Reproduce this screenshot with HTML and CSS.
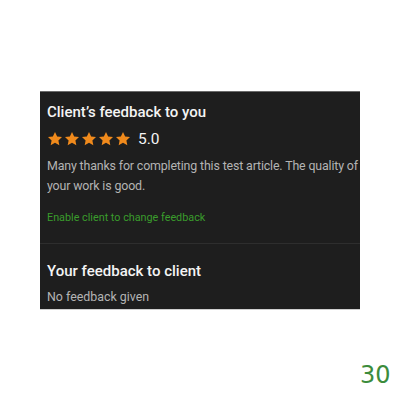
FILE: index.html
```html
<!DOCTYPE html>
<html lang="en">
<head>
<meta charset="utf-8">
<link rel="stylesheet" href="styles.css">
</head>
<body>
<div class="page">
  <section class="card">
    <div class="block">
      <h2 class="title">Client’s feedback to you</h2>
      <div class="rating">
        <span class="stars">
          <svg viewBox="0 0 24 24" class="star"><path d="M12 1.5l3.2 6.7 7.3.9-5.4 5 1.4 7.3L12 17.8l-6.5 3.6 1.4-7.3-5.4-5 7.3-.9z"/></svg>
          <svg viewBox="0 0 24 24" class="star"><path d="M12 1.5l3.2 6.7 7.3.9-5.4 5 1.4 7.3L12 17.8l-6.5 3.6 1.4-7.3-5.4-5 7.3-.9z"/></svg>
          <svg viewBox="0 0 24 24" class="star"><path d="M12 1.5l3.2 6.7 7.3.9-5.4 5 1.4 7.3L12 17.8l-6.5 3.6 1.4-7.3-5.4-5 7.3-.9z"/></svg>
          <svg viewBox="0 0 24 24" class="star"><path d="M12 1.5l3.2 6.7 7.3.9-5.4 5 1.4 7.3L12 17.8l-6.5 3.6 1.4-7.3-5.4-5 7.3-.9z"/></svg>
          <svg viewBox="0 0 24 24" class="star"><path d="M12 1.5l3.2 6.7 7.3.9-5.4 5 1.4 7.3L12 17.8l-6.5 3.6 1.4-7.3-5.4-5 7.3-.9z"/></svg>
        </span>
        <span class="score">5.0</span>
      </div>
      <p class="comment">Many thanks for completing this test article. The quality of your work is good.</p>
      <a class="link" href="#">Enable client to change feedback</a>
    </div>
    <div class="block second">
      <h2 class="title">Your feedback to client</h2>
      <p class="empty">No feedback given</p>
    </div>
  </section>
  <div class="page-num">30</div>
</div>
</body>
</html>
```
FILE: styles.css
```css
html, body {
  margin: 0;
  padding: 0;
  background: #ffffff;
}

.page {
  width: 400px;
  height: 400px;
  position: relative;
  font-family: Roboto, "Liberation Sans", sans-serif;
}

.card {
  position: absolute;
  left: 40px;
  top: 91px;
  width: 320px;
  height: 219px;
  box-sizing: border-box;
  background: #1e1e1e;
  border-top: 1px solid #6a6a6a;
  border-bottom: 1px solid #cfcfcf;
  display: flex;
  flex-direction: column;
}

.block {
  padding: 0 0 0 7px;
}

.block:first-child {
  padding-top: 10px;
  padding-bottom: 18px;
  border-bottom: 1px solid #2e2e2e;
}

.second {
  padding-top: 17px;
}

.title {
  margin: 0;
  font-size: 15px;
  font-weight: 500;
  color: #f4f4f4;
  line-height: 20px;
}

.rating {
  display: flex;
  align-items: center;
  margin-top: 8px;
  height: 18px;
}

.stars {
  display: flex;
  gap: 1px;
}

.star {
  width: 16px;
  height: 16px;
  fill: #f08a1c;
}

.score {
  margin-left: 7px;
  font-size: 15.5px;
  color: #f4f4f4;
  line-height: 18px;
}

.comment {
  margin: 8px 0 0;
  font-size: 12.4px;
  letter-spacing: -0.15px;
  line-height: 20px;
  color: #b4b4b4;
}

.link {
  display: block;
  margin-top: 15px;
  font-size: 10.8px;
  line-height: 14px;
  color: #3a9c2c;
  text-decoration: none;
}

.empty {
  margin: 8px 0 0;
  font-size: 12.4px;
  line-height: 16px;
  color: #b4b4b4;
}

.page-num {
  position: absolute;
  left: 360px;
  top: 359px;
  font-family: "DejaVu Sans", sans-serif;
  font-size: 24px;
  color: #3c8c3c;
  line-height: 32px;
}
```
